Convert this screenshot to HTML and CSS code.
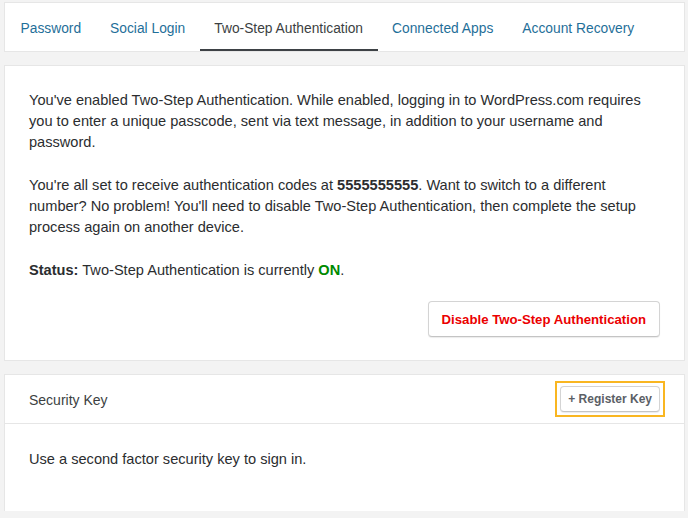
FILE: index.html
```html
<!DOCTYPE html>
<html>
<head>
<meta charset="utf-8">
<link rel="stylesheet" href="styles.css">
</head>
<body>
<div class="page">
  <nav class="tabs card">
    <a class="tab">Password</a>
    <a class="tab">Social Login</a>
    <a class="tab active">Two-Step Authentication</a>
    <a class="tab">Connected Apps</a>
    <a class="tab">Account Recovery</a>
  </nav>

  <section class="card main">
    <p>You've enabled Two-Step Authentication. While enabled, logging in to WordPress.com requires you to enter a unique passcode, sent via text message, in addition to your username and password.</p>
    <p>You're all set to receive authentication codes at <strong>5555555555</strong>. Want to switch to a different number? No problem! You'll need to disable Two-Step Authentication, then complete the setup process again on another device.</p>
    <p class="status"><strong>Status:</strong> Two-Step Authentication is currently <strong class="on">ON</strong>.</p>
    <div class="actions">
      <button class="btn danger">Disable Two-Step Authentication</button>
    </div>
  </section>

  <section class="card keys">
    <header class="keys-head">
      <span class="keys-title">Security Key</span>
      <span class="highlight"><button class="btn small">+ Register Key</button></span>
    </header>
    <div class="keys-body">Use a second factor security key to sign in.</div>
  </section>
</div>
</body>
</html>
```
FILE: styles.css
```css
html, body {
  margin: 0;
  padding: 0;
  background: #f3f3f3;
}
body {
  font-family: "Liberation Sans", Arial, sans-serif;
  color: #2b2d2f;
}
.page {
  padding: 3px 4px 0 5px;
  display: flex;
  flex-direction: column;
}
.card {
  background: #fff;
  box-shadow: 0 0 0 1px #e6e6e6;
}
.tabs {
  display: flex;
  height: 48px;
  padding-left: 1px;
  margin-bottom: 15px;
}
.tab {
  display: flex;
  align-items: center;
  padding: 5px 14.5px 0;
  font-size: 13.8px;
  color: #1f6f99;
  border-bottom: 2px solid transparent;
  white-space: nowrap;
}
.tab.active {
  color: #3c3f42;
  border-bottom-color: #3d4145;
}
.main {
  padding: 24px 24px 23px 24px;
  margin-bottom: 15px;
}
.main p {
  margin: 0 0 22px;
  font-size: 14.6px;
  line-height: 21px;
}
.main p.status {
  margin-bottom: 0;
}
.on {
  color: #008a00;
}
.actions {
  display: flex;
  justify-content: flex-end;
  margin-top: 20px;
}
.btn {
  font-family: inherit;
  background: #fff;
  border: 1px solid #d4d4d4;
  border-bottom-color: #c4c4c4;
  border-radius: 4px;
  box-shadow: 0 1px 1px rgba(0,0,0,0.08);
  cursor: pointer;
}
.danger {
  height: 36px;
  padding: 0 13px;
  color: #eb0001;
  font-size: 13.2px;
  font-weight: bold;
}
.keys {
  height: 136px;
  display: flex;
  flex-direction: column;
}
.keys-head {
  height: 48px;
  border-bottom: 1px solid #e6e6e6;
  display: flex;
  align-items: center;
  justify-content: space-between;
  padding: 0 19px 0 24px;
}
.keys-title {
  font-size: 14px;
  color: #3c3f42;
  padding-top: 2px;
}
.highlight {
  border: 2px solid #f9b621;
  padding: 3px 3px;
  display: flex;
}
.small {
  height: 26px;
  padding: 0 7px;
  font-size: 12px;
  font-weight: bold;
  color: #5b6066;
}
.keys-body {
  padding: 25px 24px;
  font-size: 14.6px;
  line-height: 21px;
}
```
